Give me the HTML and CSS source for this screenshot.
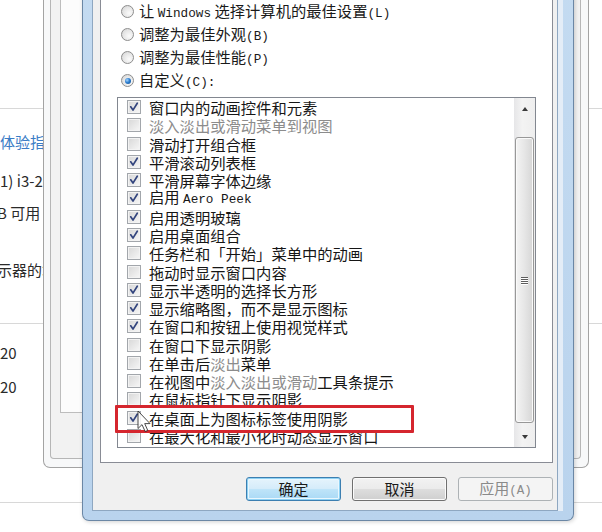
FILE: index.html
```html
<!DOCTYPE html>
<html lang="zh-CN">
<head>
<meta charset="utf-8">
<title>性能选项</title>
<link rel="stylesheet" href="styles.css">
</head>
<body>
<div class="desk">
  <div class="sysinfo">
    <div class="blank"></div>
    <div class="rule"></div>
    <div class="sec-a">
      <div class="line link">体验指数</div>
      <div class="line l-b">1) i3-2</div>
      <div class="line l-c">B 可用</div>
      <div class="line l-d">示器的笔</div>
    </div>
    <div class="rule"></div>
    <div class="sec-b">
      <div class="line">20</div>
      <div class="line l-f">20</div>
    </div>
    <div class="rule"></div>
  </div>

  <div class="bgwin">
    <div class="bgwin-client">
      <div class="bgwin-page"></div>
    </div>
  </div>

  <div class="dialog">
    <div class="client">
      <div class="tabpage">
        <div class="radios">
          <div class="radio-row"><span class="radio"></span><span>让 <span class="lat">Windows</span> 选择计算机的最佳设置<span class="lat">(L)</span></span></div>
          <div class="radio-row"><span class="radio"></span><span>调整为最佳外观<span class="lat">(B)</span></span></div>
          <div class="radio-row"><span class="radio"></span><span>调整为最佳性能<span class="lat">(P)</span></span></div>
          <div class="radio-row"><span class="radio on"></span><span>自定义<span class="lat">(C):</span></span></div>
        </div>
        <div class="listbox">
          <ul class="items">
            <li class="item"><span class="cb"><svg viewBox="0 0 14 14"><path d="M3.2 6.8 L5.8 10.6 L10.8 2.6"/></svg></span><span>窗口内的动画控件和元素</span></li>
            <li class="item"><span class="cb"></span><span class="fade">淡入淡出或滑动菜单到视图</span></li>
            <li class="item"><span class="cb"></span><span>滑动打开组合框</span></li>
            <li class="item"><span class="cb"><svg viewBox="0 0 14 14"><path d="M3.2 6.8 L5.8 10.6 L10.8 2.6"/></svg></span><span>平滑滚动列表框</span></li>
            <li class="item"><span class="cb"><svg viewBox="0 0 14 14"><path d="M3.2 6.8 L5.8 10.6 L10.8 2.6"/></svg></span><span>平滑屏幕字体边缘</span></li>
            <li class="item"><span class="cb"><svg viewBox="0 0 14 14"><path d="M3.2 6.8 L5.8 10.6 L10.8 2.6"/></svg></span><span>启用 <span class="lat">Aero Peek</span></span></li>
            <li class="item"><span class="cb"><svg viewBox="0 0 14 14"><path d="M3.2 6.8 L5.8 10.6 L10.8 2.6"/></svg></span><span>启用透明玻璃</span></li>
            <li class="item"><span class="cb"><svg viewBox="0 0 14 14"><path d="M3.2 6.8 L5.8 10.6 L10.8 2.6"/></svg></span><span>启用桌面组合</span></li>
            <li class="item"><span class="cb"></span><span>任务栏和「开始」菜单中的动画</span></li>
            <li class="item"><span class="cb"></span><span>拖动时显示窗口内容</span></li>
            <li class="item"><span class="cb"><svg viewBox="0 0 14 14"><path d="M3.2 6.8 L5.8 10.6 L10.8 2.6"/></svg></span><span>显示半透明的选择长方形</span></li>
            <li class="item"><span class="cb"><svg viewBox="0 0 14 14"><path d="M3.2 6.8 L5.8 10.6 L10.8 2.6"/></svg></span><span>显示缩略图，而不是显示图标</span></li>
            <li class="item"><span class="cb"><svg viewBox="0 0 14 14"><path d="M3.2 6.8 L5.8 10.6 L10.8 2.6"/></svg></span><span>在窗口和按钮上使用视觉样式</span></li>
            <li class="item"><span class="cb"></span><span>在窗口下显示阴影</span></li>
            <li class="item"><span class="cb"></span><span>在单击后<span class="fade">淡出</span>菜单</span></li>
            <li class="item"><span class="cb"></span><span>在视图中<span class="fade">淡入淡出或滑动</span>工具条提示</span></li>
            <li class="item"><span class="cb"></span><span>在鼠标指针下显示阴影</span></li>
            <li class="item"><span class="cb"><svg viewBox="0 0 14 14"><path d="M3.2 6.8 L5.8 10.6 L10.8 2.6"/></svg></span><span>在桌面上为图标标签使用阴影</span></li>
            <li class="item"><span class="cb"></span><span>在最大化和最小化时动态显示窗口</span></li>
          </ul>
          <div class="scrollbar">
            <div class="sb-btn"><span class="tri up"></span></div>
            <div class="sb-gap"></div>
            <div class="thumb"><span class="grip"><i></i><i></i><i></i><i></i></span></div>
            <div class="sb-rest"></div>
            <div class="sb-btn"><span class="tri down"></span></div>
          </div>
        </div>
      </div>
      <div class="buttons">
        <button class="btn default">确定</button>
        <button class="btn">取消</button>
        <button class="btn disabled">应用<span class="lat">(A)</span></button>
      </div>
    </div>
  </div>

  <div class="highlight"></div>
  <svg class="cursor" viewBox="0 0 14 23"><path d="M1 1 L1 18.5 L5 14.6 L8.2 21.6 L10.8 20.5 L7.7 13.6 L13 13.6 Z"/></svg>
</div>
</body>
</html>
```

FILE: styles.css
```css
* { box-sizing: border-box; margin: 0; padding: 0; }
html, body { width: 602px; height: 532px; overflow: hidden; background: #fff; }
body { font-family: "Noto Sans CJK SC", "Noto Sans", sans-serif; color: #1a1a1a; }

.desk { position: relative; width: 602px; height: 532px; overflow: hidden; background: #fff; }

/* background page */
.sysinfo { display: flex; flex-direction: column; font-size: 15px; color: #2a2a2a; }
.blank { height: 108px; }
.rule { height: 1px; background: #d8d8d8; }
.sec-a { height: 214px; padding-top: 22px; display: flex; flex-direction: column; }
.sec-b { height: 178px; padding-top: 18px; display: flex; flex-direction: column; }
.line { height: 22px; line-height: 22px; white-space: nowrap; }
.link { color: #3a7cc6; }
.l-b { margin-top: 17px; }
.l-c { margin-top: 10px; margin-left: -3px; }
.l-d { margin-top: 35px; margin-left: -3px; }
.l-f { margin-top: 12px; }

/* window behind */
.bgwin {
  position: absolute; left: 43px; top: -20px; width: 546px; height: 488px;
  border: 1px solid #a3a3a3; border-top: none; border-radius: 0 0 7px 7px;
  background: #f7f8f9; padding: 0 7px 8px 6px; display: flex;
}
.bgwin-client {
  flex: 1; display: flex; border: 1px solid #b6b6b6; border-top: none;
  border-radius: 0 0 4px 4px; background: #f2f2f2; padding: 0 6px 45px 9px;
}
.bgwin-page { flex: 1; border: 1px solid #bdbdbd; border-top: none; background: #fcfcfc; }

/* dialog */
.dialog {
  position: absolute; left: 82px; top: -40px; width: 492px; height: 561px;
  border: 1px solid #6b87a5; border-top: none; border-radius: 0 0 7px 7px;
  background: linear-gradient(to bottom, #c4dbf1, #b9d3ed);
  padding: 0 15px 9px 9px; display: flex;
  box-shadow: 1px 1px 4px rgba(0, 0, 0, 0.18);
}
.client {
  flex: 1; display: flex; flex-direction: column;
  border: 1px solid #8ea7c1; border-top: none; background: #f0f0f0;
  padding: 0 4px 0 7px; box-shadow: 5px 0 0 #e4edf7;
}
.tabpage {
  flex: 1; display: flex; flex-direction: column;
  border: 1px solid #898c95; border-top: none; background: #fff;
  padding: 40px 0 0 16px;
}
.lat { font-family: "Liberation Mono", monospace; font-size: 12.7px; }

.radios { padding-left: 4px; }
.radio-row { height: 23px; line-height: 20px; display: flex; align-items: center; gap: 5px; font-size: 15.3px; white-space: nowrap; }
.radio {
  width: 13px; height: 13px; border-radius: 50%; border: 1px solid #8d8d8d; flex: none;
  background: radial-gradient(circle at 65% 65%, #fbfbfb 0, #e6e6e6 55%, #cfcfcf 100%);
  position: relative;
}
.radio.on::after {
  content: ""; position: absolute; left: 2.5px; top: 2.5px; width: 6px; height: 6px; border-radius: 50%;
  background: radial-gradient(circle at 35% 35%, #a6d6ff 0, #2f7fd0 45%, #0d4b8f 100%);
}

.listbox {
  margin-top: 5px; width: 419px; height: 351px; border: 1px solid #828790;
  display: flex; background: #fff;
}
.items { flex: 1; list-style: none; padding-left: 9px; overflow: hidden; }
.item { height: 18.28px; line-height: 18px; display: flex; align-items: center; gap: 8px; white-space: nowrap; font-size: 15.3px; color: #161616; }
.cb {
  width: 14px; height: 14px; flex: none; border: 1px solid #a2a6ab;
  background: linear-gradient(135deg, #d7d7d7, #f7f7f7);
  box-shadow: inset 0 0 0 1px #f3f3f3;
  display: flex;
}
.cb svg { width: 12px; height: 12px; }
.cb path { fill: none; stroke: #33457e; stroke-width: 2; stroke-linecap: round; stroke-linejoin: round; }
.fade { color: #8c8c8c; }

.scrollbar {
  width: 21px; display: flex; flex-direction: column;
  background: linear-gradient(to right, #e6e6e8, #f3f3f3 40%, #eeeeee);
}
.sb-btn { height: 21px; display: flex; align-items: center; justify-content: center; }
.sb-gap { height: 18px; }
.sb-rest { flex: 1; }
.tri { width: 0; height: 0; border-left: 3.5px solid transparent; border-right: 3.5px solid transparent; }
.tri.up { border-bottom: 4px solid #3a3a3a; }
.tri.down { border-top: 4px solid #3a3a3a; }
.thumb {
  height: 286px; margin: 0 1px; border: 1px solid #989898; border-radius: 3px;
  background: linear-gradient(to right, #f4f4f4, #e6e6e6 50%, #d6d6d6);
  box-shadow: inset 0 0 0 1px #fafafa;
  display: flex; align-items: center; justify-content: center;
}
.grip { display: flex; flex-direction: column; gap: 1px; }
.grip i { display: block; width: 7px; height: 1px; background: #5d5d5d; box-shadow: 0 1px 0 #ffffff; }

.buttons {
  height: 47px; display: flex; justify-content: flex-end; align-items: flex-start;
  padding-top: 14px; gap: 11px;
}
.btn {
  width: 95px; height: 24px; border: 1px solid #707070; border-radius: 3px;
  background: linear-gradient(to bottom, #f2f2f2 0, #ebebeb 48%, #dddddd 52%, #cfcfcf 100%);
  box-shadow: inset 0 0 0 1px #fbfbfb;
  font-family: "Noto Sans CJK SC", sans-serif; font-size: 15px; line-height: 20px; color: #1a1a1a;
}
.btn.default {
  border-color: #3c7fb1;
  background: linear-gradient(to bottom, #e6f4fc 0, #d5ecfa 48%, #bee4f9 52%, #a9d9f5 100%);
  box-shadow: inset 0 0 0 1px #8ed1f3, inset 0 0 0 2px #e9f7fe;
}
.btn.disabled {
  border-color: #adb2b5; background: #f4f4f4; color: #8a8a8a; box-shadow: none;
}
.btn .lat { font-size: 12.5px; }

.highlight {
  position: absolute; left: 115px; top: 405px; width: 299px; height: 28px;
  border: 3px solid #d5262e; border-radius: 1px;
}
.cursor { position: absolute; left: 137px; top: 410px; width: 14px; height: 23px; opacity: 0.85; }
.cursor path { fill: #ffffff; stroke: #2a2a2a; stroke-width: 1; stroke-linejoin: miter; }
```
